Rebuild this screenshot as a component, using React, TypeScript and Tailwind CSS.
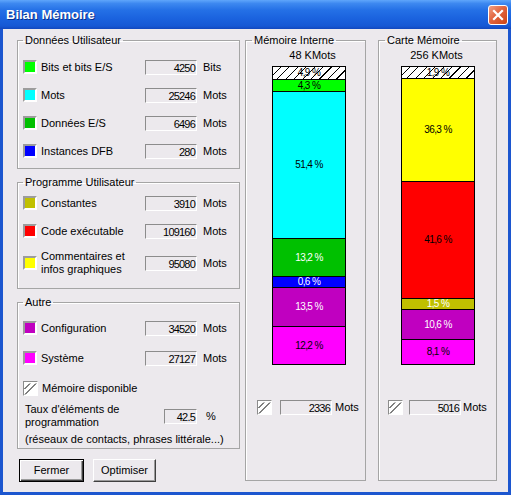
import type { ReactNode } from 'react';

type Row = { label: ReactNode; swatch: string; value: string; unit: string; tall?: boolean };

const USER_DATA: Row[] = [
  { label: 'Bits et bits E/S', swatch: 'bg-[#00ff00]', value: '4250', unit: 'Bits' },
  { label: 'Mots', swatch: 'bg-[#00ffff]', value: '25246', unit: 'Mots' },
  { label: 'Données E/S', swatch: 'bg-[#00c000]', value: '6496', unit: 'Mots' },
  { label: 'Instances DFB', swatch: 'bg-[#0000ff]', value: '280', unit: 'Mots' },
];

const USER_PROGRAM: Row[] = [
  { label: 'Constantes', swatch: 'bg-[#c0c000]', value: '3910', unit: 'Mots' },
  { label: 'Code exécutable', swatch: 'bg-[#ff0000]', value: '109160', unit: 'Mots' },
  {
    label: (
      <>
        Commentaires et
        <br />
        infos graphiques
      </>
    ),
    swatch: 'bg-[#ffff00]',
    value: '95080',
    unit: 'Mots',
    tall: true,
  },
];

const OTHER: Row[] = [
  { label: 'Configuration', swatch: 'bg-[#c000c0]', value: '34520', unit: 'Mots' },
  { label: 'Système', swatch: 'bg-[#ff00ff]', value: '27127', unit: 'Mots' },
];

type Segment = { h: string; bg: string; text: string; pct: string; first?: boolean };

const HATCH =
  'bg-[repeating-linear-gradient(135deg,#ffffff_0px,#ffffff_5px,#000000_5px,#000000_6px)]';

const INTERNAL: Segment[] = [
  { h: 'h-[12px]', bg: HATCH, text: 'text-black', pct: '4,9 %', first: true },
  { h: 'h-[12px]', bg: 'bg-[#00ff00]', text: 'text-black', pct: '4,3 %' },
  { h: 'h-[147px]', bg: 'bg-[#00ffff]', text: 'text-black', pct: '51,4 %' },
  { h: 'h-[38px]', bg: 'bg-[#00c000]', text: 'text-white', pct: '13,2 %' },
  { h: 'h-[11px]', bg: 'bg-[#0000ff]', text: 'text-white', pct: '0,6 %' },
  { h: 'h-[39px]', bg: 'bg-[#c000c0]', text: 'text-white', pct: '13,5 %' },
  { h: 'h-[38px]', bg: 'bg-[#ff00ff]', text: 'text-black', pct: '12,2 %' },
];

const CARD: Segment[] = [
  { h: 'h-[11px]', bg: HATCH, text: 'text-black', pct: '1,9 %', first: true },
  { h: 'h-[103px]', bg: 'bg-[#ffff00]', text: 'text-black', pct: '36,3 %' },
  { h: 'h-[117px]', bg: 'bg-[#ff0000]', text: 'text-black', pct: '41,6 %' },
  { h: 'h-[11px]', bg: 'bg-[#c0c000]', text: 'text-white', pct: '1,5 %' },
  { h: 'h-[30px]', bg: 'bg-[#c000c0]', text: 'text-white', pct: '10,6 %' },
  { h: 'h-[25px]', bg: 'bg-[#ff00ff]', text: 'text-black', pct: '8,1 %' },
];

function Swatch({ color }: { color: string }) {
  return (
    <span
      className={`w-[14px] h-[14px] shrink-0 border-2 border-t-[#9c9c9c] border-l-[#9c9c9c] border-b-white border-r-white ${color}`}
    />
  );
}

function HatchIcon() {
  return (
    <span className="w-[15px] h-[15px] shrink-0 border border-t-[#8c8c8c] border-l-[#8c8c8c] border-b-white border-r-white bg-white flex">
      <svg width="13" height="13" viewBox="0 0 13 13">
        <line x1="1" y1="12.5" x2="12" y2="1.5" stroke="#000" strokeWidth="1" />
        <line x1="0.5" y1="7" x2="6" y2="1.5" stroke="#000" strokeWidth="1" />
      </svg>
    </span>
  );
}

function ValueBox({ value, w = 'w-[52px]' }: { value: string; w?: string }) {
  return (
    <span
      className={`${w} inline-block h-[15px] shrink-0 border border-t-[#8c8c8c] border-l-[#8c8c8c] border-b-white border-r-white text-right pr-[1px] leading-[15px] tracking-[-0.8px]`}
    >
      {value}
    </span>
  );
}

function DataRow({ row }: { row: Row }) {
  return (
    <div className={`flex items-center pl-[5px] ${row.tall ? 'h-[30px] mt-[3px]' : 'h-[28px]'}`}>
      <Swatch color={row.swatch} />
      <span className="w-[108px] pl-[4px] leading-[13px]">{row.label}</span>
      <ValueBox value={row.value} />
      <span className="ml-[6px]">{row.unit}</span>
    </div>
  );
}

function Group({ title, className, children }: { title: string; className: string; children: ReactNode }) {
  return (
    <fieldset className={`min-w-0 border border-[#a5a5a5] shadow-[inset_1px_1px_0_#ffffff] ${className}`}>
      <legend className="ml-[5px] px-[2px] leading-[13px]">{title}</legend>
      {children}
    </fieldset>
  );
}

function Bar({ segments }: { segments: Segment[] }) {
  return (
    <div className="w-[74px] border border-black flex flex-col">
      {segments.map((s, i) => (
        <div
          key={i}
          className={`${s.h} ${s.bg} ${s.text} ${s.first ? '' : 'border-t border-black'} flex items-center justify-center text-[10px] leading-none tracking-[-0.6px]`}
        >
          {s.pct}
        </div>
      ))}
    </div>
  );
}

function XpButton({ label, isDefault }: { label: string; isDefault?: boolean }) {
  return (
    <button
      className={`h-[23px] flex items-center justify-center leading-none ${
        isDefault
          ? 'w-[65px] border border-black shadow-[inset_1px_1px_0_#ffffff,inset_-1px_-1px_0_#404040,inset_-2px_-2px_0_#9a9a9a]'
          : 'w-[63px] border border-t-white border-l-white border-b-[#404040] border-r-[#404040] shadow-[inset_-1px_-1px_0_#9a9a9a]'
      }`}
    >
      {label}
    </button>
  );
}

export default function App() {
  return (
    <div className="w-[511px] h-[495px] flex flex-col font-['Liberation_Sans',Arial,sans-serif] text-[11px] text-black">
      {/* title bar */}
      <div className="h-[29px] shrink-0 flex items-center justify-between pl-[6px] pr-[3px] bg-[linear-gradient(to_bottom,#5fa6fb_0%,#3d88f0_12%,#2470e6_35%,#1a62de_65%,#1658d4_90%,#1248be_100%)]">
        <span className="text-white font-bold text-[13px] leading-none [text-shadow:1px_1px_0_#0a2f8a]">
          Bilan Mémoire
        </span>
        <span className="w-[20px] h-[20px] rounded-[3px] border border-white bg-[linear-gradient(135deg,#f0a085_0%,#e2653f_45%,#cc4415_100%)] flex items-center justify-center">
          <svg width="12" height="12" viewBox="0 0 12 12">
            <path d="M2 2 L10 10 M10 2 L2 10" stroke="#fff" strokeWidth="2.2" strokeLinecap="square" />
          </svg>
        </span>
      </div>

      <div className="flex-1 flex px-[3px] pb-[3px] bg-[#1c56cf]">
        <div className="flex-1 flex bg-[#ece9ed] pl-[14px] pt-[5px]">
          {/* left column */}
          <div className="w-[223px] flex flex-col">
            <Group title="Données Utilisateur" className="h-[135px]">
              <div className="pt-[6px]">
                {USER_DATA.map((r, i) => (
                  <DataRow key={i} row={r} />
                ))}
              </div>
            </Group>

            <Group title="Programme Utilisateur" className="h-[113px] mt-[7px]">
              <div>
                {USER_PROGRAM.map((r, i) => (
                  <DataRow key={i} row={r} />
                ))}
              </div>
            </Group>

            <Group title="Autre" className="h-[153px] mt-[7px]">
              <div className="pt-[4px]">
                {OTHER.map((r, i) => (
                  <div key={i} className="flex items-center pl-[5px] h-[30px]">
                    <Swatch color={r.swatch} />
                    <span className="w-[108px] pl-[4px]">{r.label}</span>
                    <ValueBox value={r.value} />
                    <span className="ml-[6px]">{r.unit}</span>
                  </div>
                ))}
                <div className="flex items-center pl-[5px] h-[30px]">
                  <HatchIcon />
                  <span className="pl-[4px]">Mémoire disponible</span>
                </div>
                <div className="flex items-center pl-[7px]">
                  <span className="w-[139px] leading-[13px]">
                    Taux d'éléments de
                    <br />
                    programmation
                  </span>
                  <ValueBox value="42.5" w="w-[33px]" />
                  <span className="ml-[9px]">%</span>
                </div>
                <div className="pl-[7px] mt-[4px] leading-[13px]">
                  (réseaux de contacts, phrases littérale...)
                </div>
              </div>
            </Group>

            <div className="flex gap-[9px] mt-[10px] pl-[2px]">
              <XpButton label="Fermer" isDefault />
              <XpButton label="Optimiser" />
            </div>
          </div>

          {/* Mémoire Interne */}
          <fieldset className="min-w-0 w-[121px] h-[447px] ml-[5px] border border-[#a5a5a5] shadow-[inset_1px_1px_0_#ffffff]">
            <legend className="ml-[6px] px-[2px] leading-[13px]">Mémoire Interne</legend>
            <div className="mt-[2px] pl-[14px] text-center leading-[13px]">48 KMots</div>
            <div className="mt-[4px] pl-[26px]">
              <Bar segments={INTERNAL} />
            </div>
            <div className="mt-[34px] flex items-center pl-[11px]">
              <HatchIcon />
              <span className="ml-[8px] flex">
                <ValueBox value="2336" />
              </span>
              <span className="ml-[3px]">Mots</span>
            </div>
          </fieldset>

          {/* Carte Mémoire */}
          <fieldset className="min-w-0 w-[119px] h-[447px] ml-[12px] border border-[#a5a5a5] shadow-[inset_1px_1px_0_#ffffff]">
            <legend className="ml-[6px] px-[2px] leading-[13px]">Carte Mémoire</legend>
            <div className="mt-[2px] pr-[2px] text-center leading-[13px]">256 KMots</div>
            <div className="mt-[4px] pl-[22px]">
              <Bar segments={CARD} />
            </div>
            <div className="mt-[34px] flex items-center pl-[9px]">
              <HatchIcon />
              <span className="ml-[6px] flex">
                <ValueBox value="5016" />
              </span>
              <span className="ml-[2px]">Mots</span>
            </div>
          </fieldset>
        </div>
      </div>
    </div>
  );
}
